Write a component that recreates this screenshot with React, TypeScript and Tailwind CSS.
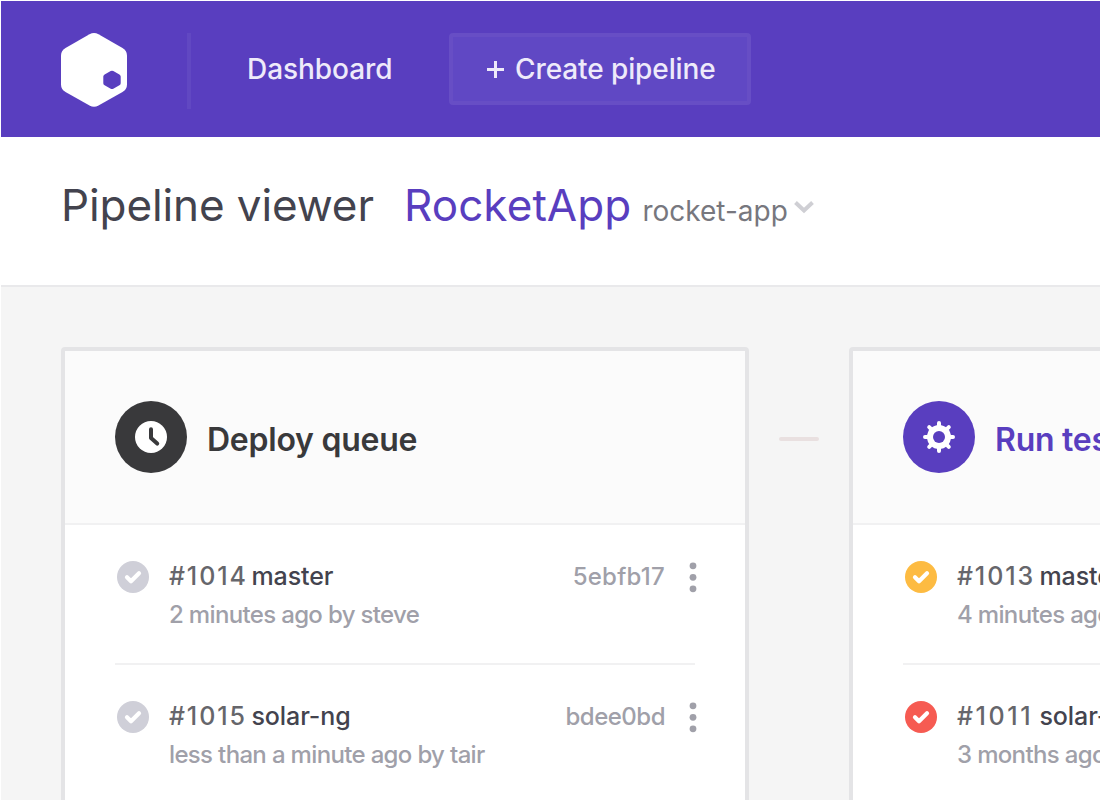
import type { ReactNode } from "react";

type Status = "pending" | "warning" | "failed";

const statusFill: Record<Status, string> = {
  pending: "fill-[#cfcfd8]",
  warning: "fill-[#fdbb42]",
  failed: "fill-[#f65b52]",
};

function Logo() {
  return (
    <svg width="66" height="74" viewBox="0 0 66 74" className="block">
      <path
        fill="#fff"
        d="M28.500 1.200Q33 -1.200 37.500 1.200L61.500 15Q66 17.600 66 22.500V51.500Q66 56.400 61.500 59L37.500 72.500Q33 74.900 28.500 72.500L4.500 59Q0 56.400 0 51.500V22.500Q0 17.600 4.500 15Z"
      />
      <path
        fill="#593ebf"
        d="M49.700 38Q51 37.300 52.300 38L58.400 41.400Q59.700 42.200 59.700 43.600V50.200Q59.700 51.600 58.400 52.300L52.300 55.700Q51 56.400 49.700 55.700L43.600 52.300Q42.300 51.600 42.300 50.200V43.600Q42.300 42.200 43.600 41.400Z"
      />
    </svg>
  );
}

function ClockIcon() {
  return (
    <svg width="32" height="32" viewBox="0 0 32 32">
      <circle cx="16" cy="16" r="16" fill="#fff" />
      <path d="M16 8.200V17L22.200 22.600" fill="none" stroke="#39393b" strokeWidth="4" strokeLinecap="round" strokeLinejoin="round" />
    </svg>
  );
}

function GearIcon() {
  return (
    <svg width="32" height="32" viewBox="0 0 32 32">
      <g stroke="#fff" strokeWidth="4" strokeLinecap="round">
        <path d="M16 2V30M2 16H30M6.200 6.200L25.800 25.800M25.800 6.200L6.200 25.800" />
      </g>
      <circle cx="16" cy="16" r="12" fill="#fff" />
      <circle cx="16" cy="16" r="6" fill="#593ebf" />
    </svg>
  );
}

function StatusIcon({ status }: { status: Status }) {
  return (
    <svg width="32" height="32" viewBox="0 0 32 32" className="shrink-0">
      <circle cx="16" cy="16" r="16" className={statusFill[status]} />
      <path d="M10 16.300L14 20.200L22 12.200" fill="none" stroke="#fff" strokeWidth="4.200" strokeLinecap="round" strokeLinejoin="round" />
    </svg>
  );
}

function Dots() {
  return (
    <svg width="8" height="32" viewBox="0 0 8 32" fill="#a0a0a9" className="shrink-0">
      <circle cx="4" cy="4.800" r="3.400" />
      <circle cx="4" cy="16.300" r="3.400" />
      <circle cx="4" cy="27.800" r="3.400" />
    </svg>
  );
}

interface Build {
  id: string;
  branch: string;
  when: string;
  hash: string;
  status: Status;
  idSpacing: string;
  hashSpacing: string;
}

function Row({ build }: { build: Build }) {
  return (
    <li className="flex h-[140px] items-start border-b-2 border-[#f1f1f2] pt-8 pl-0.5">
      <div className="mt-1 flex">
        <StatusIcon status={build.status} />
      </div>
      <div className="ml-5 min-w-0 flex-1 leading-[38px] whitespace-nowrap">
        <p className="flex text-[25px]">
          <span className={`w-[82.500px] font-[480] text-[#66666b] ${build.idSpacing}`}>{build.id}</span>
          <span className="font-medium tracking-[-0.1px] text-[#43434e]">{build.branch}</span>
        </p>
        <p className="pt-px text-[24px] font-medium tracking-[-0.66px] text-[#a0a0a9]">{build.when}</p>
      </div>
      <span className={`mt-px text-[24px] leading-[38px] font-medium text-[#a0a0a9] ${build.hashSpacing}`}>{build.hash}</span>
      <div className="mt-1 -mr-0.5 ml-6 flex">
        <Dots />
      </div>
    </li>
  );
}

function Column({ title, titleClass, circleClass, icon, builds }: {
  title: string;
  titleClass: string;
  circleClass: string;
  icon: ReactNode;
  builds: Build[];
}) {
  return (
    <section className="h-[560px] w-[688px] shrink-0 rounded border-4 border-[#e4e4e6] bg-white">
      <header className="flex h-[174px] items-center border-b-2 border-[#f1f1f2] bg-[#fbfbfb] px-[50px]">
        <div className={`flex size-[72px] items-center justify-center rounded-full ${circleClass}`}>{icon}</div>
        <h2 className={`mt-1.5 ml-[20px] text-[32px] leading-10 font-semibold tracking-[-0.25px] ${titleClass}`}>{title}</h2>
      </header>
      <ul className="px-[50px]">
        {builds.map((b) => (
          <Row key={b.id} build={b} />
        ))}
      </ul>
    </section>
  );
}

const queue: Build[] = [
  { id: "#1014", branch: "master", when: "2 minutes ago by steve", hash: "5ebfb17", status: "pending", idSpacing: "tracking-[1.900px]", hashSpacing: "tracking-[0.25px]" },
  { id: "#1015", branch: "solar-ng", when: "less than a minute ago by tair", hash: "bdee0bd", status: "pending", idSpacing: "tracking-[1.900px]", hashSpacing: "tracking-[-0.5px]" },
];

const tests: Build[] = [
  { id: "#1013", branch: "master", when: "4 minutes ago by steve", hash: "9fc02ab", status: "warning", idSpacing: "tracking-[1.900px]", hashSpacing: "tracking-[0px]" },
  { id: "#1011", branch: "solar-ng", when: "3 months ago by tair", hash: "c41d7e0", status: "failed", idSpacing: "tracking-[2.600px]", hashSpacing: "tracking-[0px]" },
];

export default function App() {
  return (
    <div className="h-[800px] w-[1100px] overflow-hidden bg-white pt-px pl-px font-['Inter','Liberation_Sans',sans-serif]">
      <nav className="flex h-[136px] items-start bg-[#593ebf] pt-8 pl-[60px] text-[28px] font-medium whitespace-nowrap text-[#eeeafa]">
        <Logo />
        <div className="ml-[60px] h-[76px] w-1 bg-white/5" />
        <a className="ml-[55px] w-[147px] pl-px leading-[73px] tracking-[-0.05px]">Dashboard</a>
        <button className="ml-[56px] flex h-[72px] w-[302px] items-center rounded border-4 border-[#674ec5] bg-[#6048c4] pl-[34px] font-medium">
          <svg width="17" height="17" viewBox="0 0 17 17" className="mt-px shrink-0">
            <path d="M8.500 0V17M0 8.500H17" stroke="#eeeafa" strokeWidth="3" />
          </svg>
          <span className="ml-[11px] tracking-[-0.1px]">Create pipeline</span>
        </button>
      </nav>
      <header className="flex h-[150px] items-baseline border-b-2 border-[#e9e9eb] pt-[38px] pl-[60px] leading-[60px] whitespace-nowrap">
        <h1 className="text-[44px] font-[430] tracking-[-0.1px] text-[#43434e]">Pipeline viewer</h1>
        <span className="ml-[30px] text-[44px] font-[430] tracking-[0.1px] text-[#593ebf]">RocketApp</span>
        <span className="ml-[11px] text-[28px] font-[430] text-[#77777e]">rocket-app</span>
        <svg width="22" height="14" viewBox="0 0 22 14" className="relative -top-[7px] ml-[5.500px]">
          <path d="M2.500 2.500L11 10.500L19.500 2.500" fill="none" stroke="#cfcfd4" strokeWidth="4" />
        </svg>
      </header>
      <main className="flex h-[513px] bg-[#f5f5f5] pt-[60px] pl-[60px]">
        <Column
          title="Deploy queue"
          titleClass="text-[#39393b]"
          circleClass="bg-[#39393b]"
          icon={<ClockIcon />}
          builds={queue}
        />
        <div className="mx-[30px] mt-[90px] h-1 w-10 shrink-0 rounded-full bg-[#e9e0e0]" />
        <Column
          title="Run tests"
          titleClass="text-[#593ebf]"
          circleClass="bg-[#593ebf]"
          icon={<GearIcon />}
          builds={tests}
        />
      </main>
    </div>
  );
}
